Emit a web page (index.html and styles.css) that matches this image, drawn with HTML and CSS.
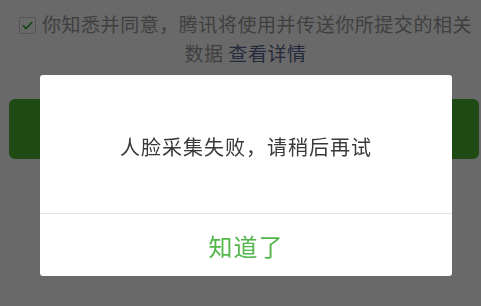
FILE: index.html
```html
<!DOCTYPE html>
<html lang="zh-CN">
<head>
<meta charset="utf-8">
<title>人脸采集</title>
<link rel="stylesheet" href="styles.css">
</head>
<body>
<main class="page">
  <p class="agree"><span class="checkbox"><svg viewBox="0 0 16 16" width="16" height="16"><path d="M3.5 8.5 L6.5 11.2 L12.5 5" fill="none" stroke="#33b033" stroke-width="1.8" stroke-linecap="round" stroke-linejoin="round"/></svg></span><span>你知悉并同意，腾讯将使用并传送你所提交的相关</span><br><span>数据</span> <a class="link" href="#">查看详情</a></p>
  <div class="primary-btn"></div>
</main>
<div class="mask"></div>
<div class="dialog" role="dialog">
  <div class="dialog-body">人脸采集失败，请稍后再试</div>
  <div class="dialog-footer"><a class="dialog-btn" href="#">知道了</a></div>
</div>
</body>
</html>
```
FILE: styles.css
```css
html, body {
  margin: 0;
  padding: 0;
  background: #ffffff;
  font-family: "Noto Sans CJK SC", "Noto Sans", sans-serif;
  overflow: hidden;
}
.page {
  width: 481px;
  height: 306px;
  padding-top: 9px;
  box-sizing: border-box;
}
.agree {
  margin: 0;
  padding: 0 0 0 10px;
  text-align: center;
  font-size: 19px;
  letter-spacing: 0.55px;
  line-height: 29px;
  color: #9a9a9a;
}
.checkbox {
  display: inline-block;
  width: 15px;
  height: 15px;
  border: 1px solid #cfcfcf;
  border-radius: 2px;
  margin-right: 6px;
  vertical-align: -2px;
}
.checkbox svg {
  display: block;
  width: 15px;
  height: 15px;
}
.link {
  color: #5a6795;
  text-decoration: none;
}
.primary-btn {
  margin: 32px 2px 0 9px;
  height: 60px;
  border-radius: 6px;
  background: #4bb52f;
}
.mask {
  position: fixed;
  inset: 0;
  background: rgba(0, 0, 0, 0.59);
}
.dialog {
  position: fixed;
  left: 40px;
  top: 75px;
  width: 412px;
  background: #ffffff;
  border-radius: 3px;
  overflow: hidden;
}
.dialog-body {
  height: 138px;
  display: flex;
  align-items: center;
  justify-content: center;
  font-size: 20px;
  letter-spacing: 1px;
  color: #3a3a3a;
  padding-top: 4px;
  box-sizing: border-box;
}
.dialog-footer {
  border-top: 1px solid #e3e3e3;
  height: 62px;
  display: flex;
  align-items: center;
  justify-content: center;
}
.dialog-btn {
  font-size: 24px;
  letter-spacing: 1px;
  color: #52b64a;
  text-decoration: none;
}
```
